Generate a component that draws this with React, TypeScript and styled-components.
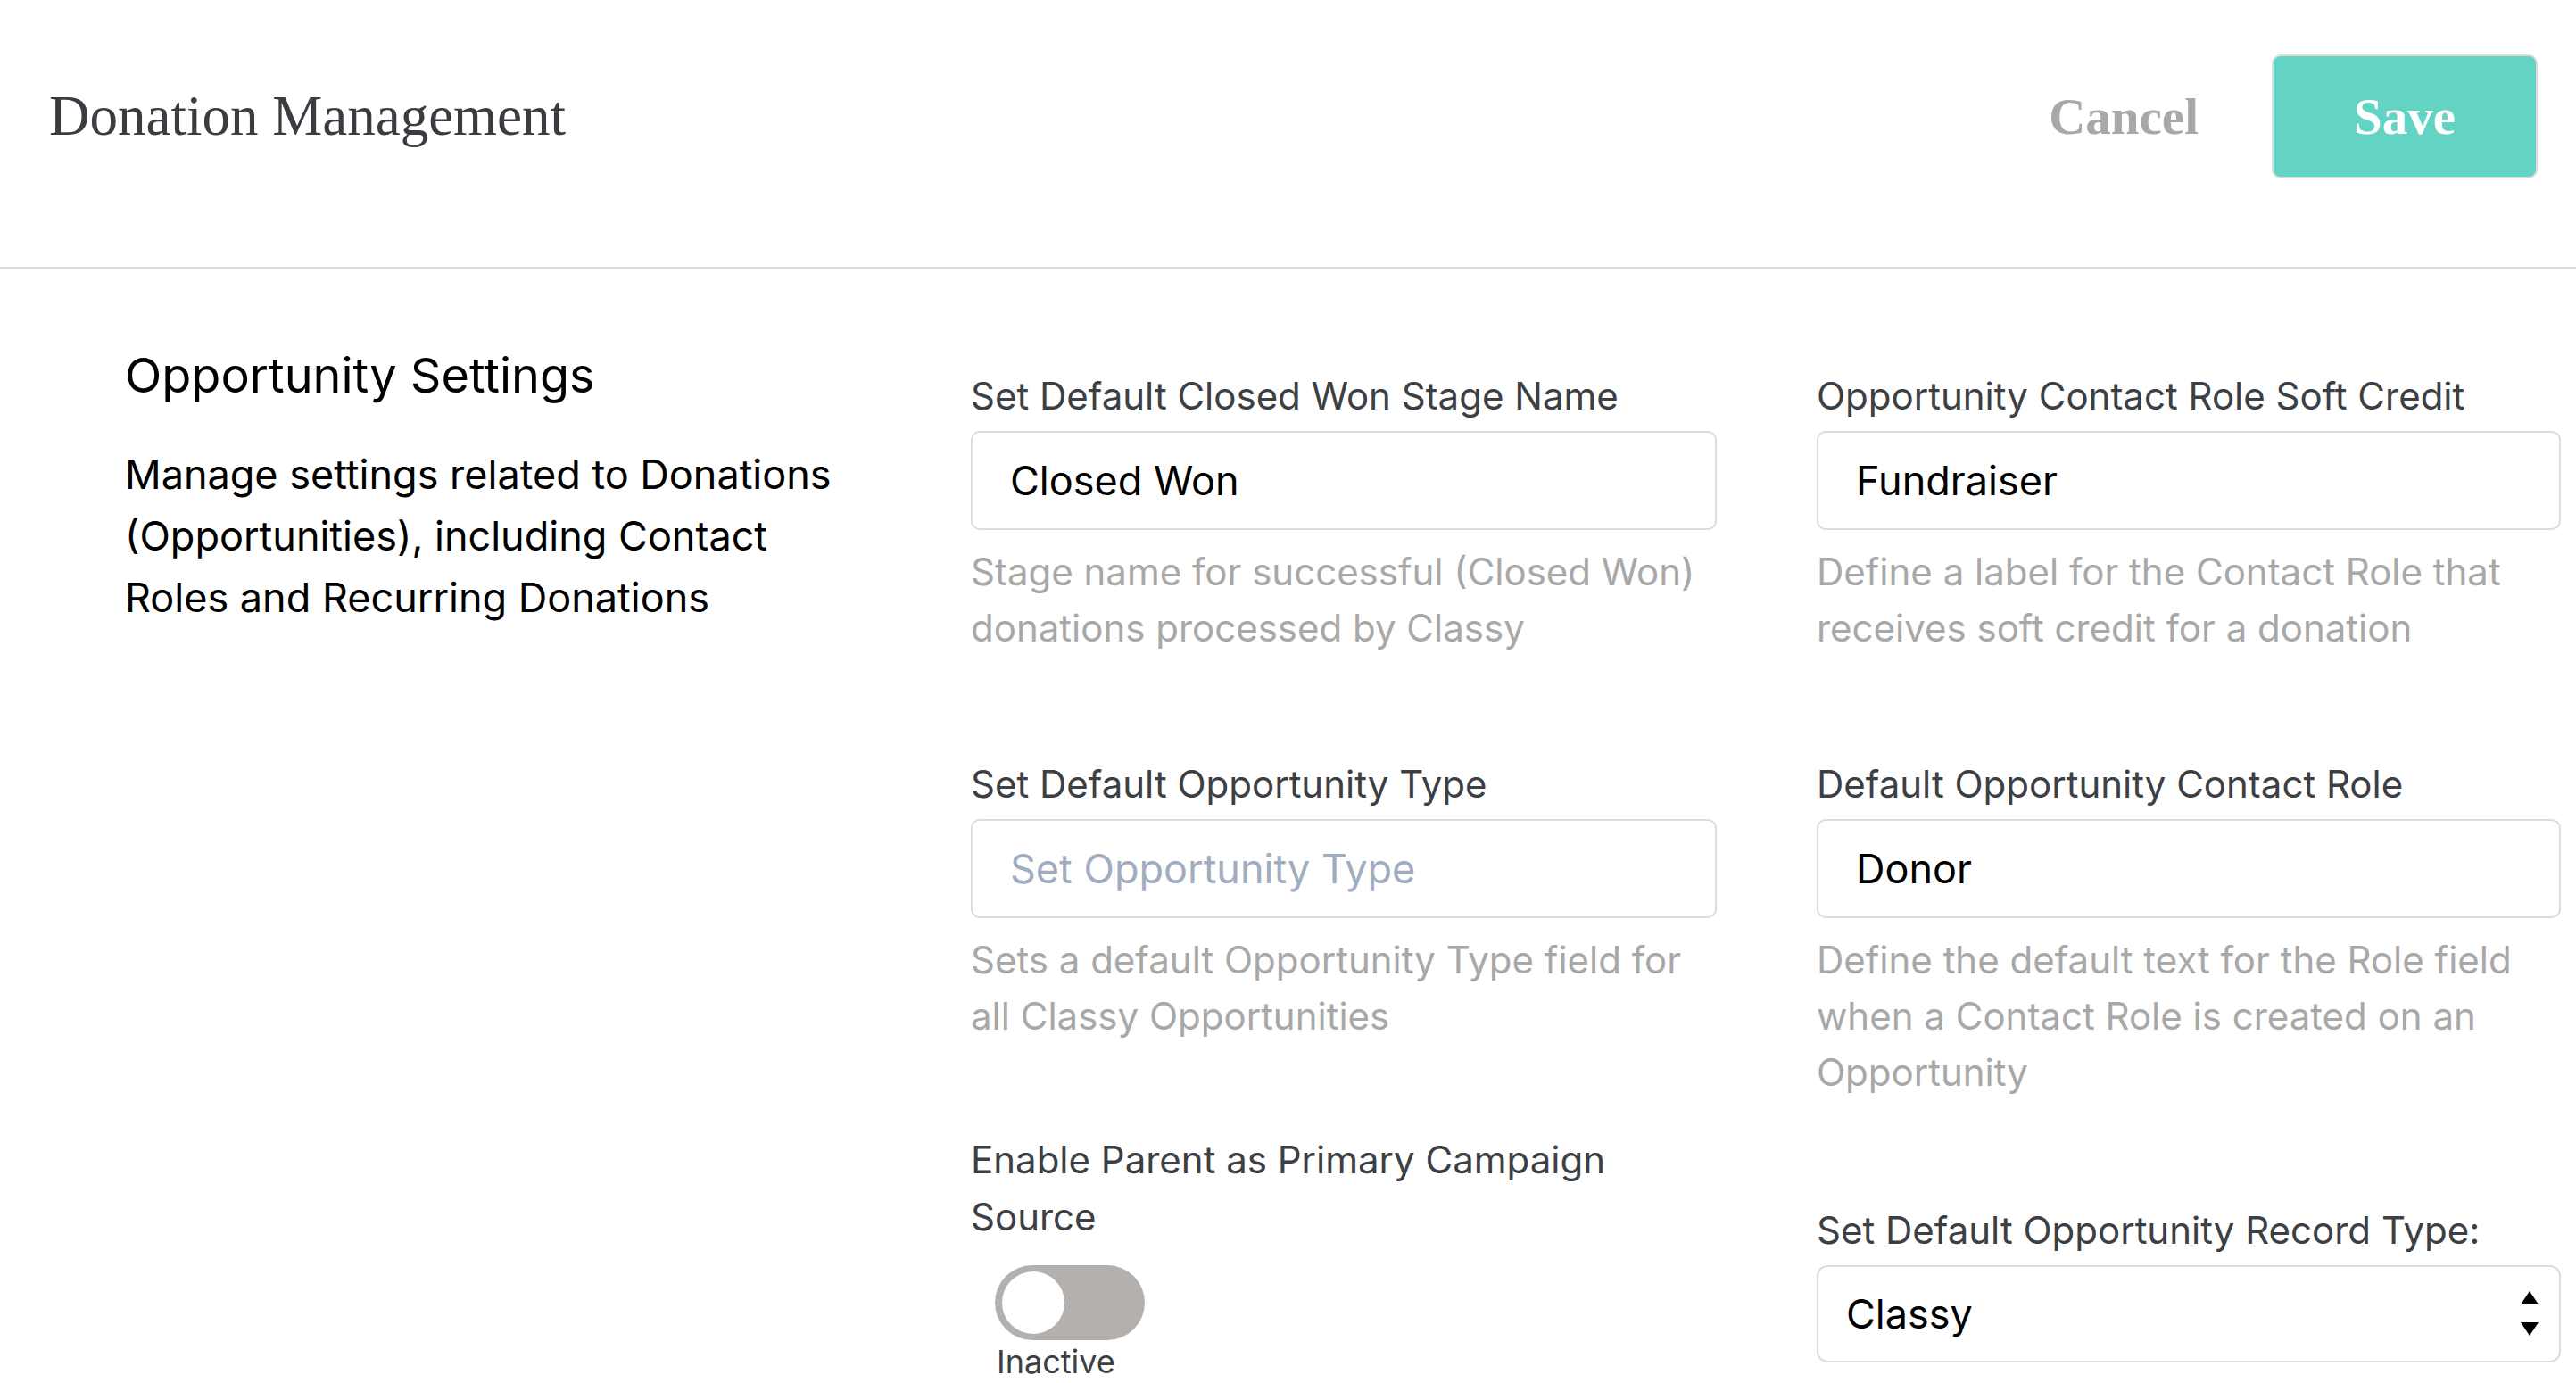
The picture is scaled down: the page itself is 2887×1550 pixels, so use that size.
import React from "react";
import styled, { createGlobalStyle } from "styled-components";

const GlobalStyle = createGlobalStyle`
  html, body {
    margin: 0;
    padding: 0;
    background: #ffffff;
  }
  body {
    font-family: Inter, "Liberation Sans", sans-serif;
    overflow: hidden;
  }
  * {
    box-sizing: border-box;
  }
`;

const Page = styled.div`
  width: 2887px;
  min-height: 1550px;
`;

const Header = styled.header`
  display: flex;
  align-items: center;
  justify-content: space-between;
  height: 301px;
  padding: 0 43px 38px 55px;
  border-bottom: 2px solid #dcdcdc;
`;

const PageTitle = styled.h1`
  margin: 0;
  font-family: "Liberation Serif", serif;
  font-size: 63px;
  font-weight: 400;
  line-height: 1;
  color: #393c41;
`;

const Actions = styled.div`
  display: flex;
  align-items: center;
  gap: 82px;
`;

const TextButton = styled.button`
  border: none;
  background: none;
  padding: 0;
  font-family: "Liberation Serif", serif;
  font-size: 57px;
  font-weight: 700;
  line-height: 1;
  color: #a6a8ab;
  cursor: pointer;
`;

const SaveButton = styled.button`
  width: 298px;
  height: 139px;
  border: 2px solid #dcdcdc;
  border-radius: 10px;
  background: #63d3c3;
  font-family: "Liberation Serif", serif;
  font-size: 57px;
  font-weight: 700;
  line-height: 1;
  color: #ffffff;
  cursor: pointer;
`;

const Body = styled.main`
  display: grid;
  grid-template-columns: 836px 836px 834px;
  column-gap: 112px;
  padding: 87px 0 0 140px;
`;

const Intro = styled.section``;

const SectionTitle = styled.h2`
  margin: 0;
  font-size: 54px;
  font-weight: 400;
  line-height: 66px;
  color: #000000;
`;

const SectionText = styled.p`
  margin: 43px 0 0;
  font-size: 45px;
  line-height: 69px;
  color: #000000;
`;

const FieldColumn = styled.div`
  display: flex;
  flex-direction: column;
  padding-top: 24px;
`;

const Field = styled.div<{ $gap?: number; $maxWidth?: number }>`
  display: flex;
  flex-direction: column;
  margin-top: ${({ $gap }) => $gap ?? 0}px;
  max-width: ${({ $maxWidth }) => ($maxWidth ? `${$maxWidth}px` : "none")};
`;

const Label = styled.label`
  margin-bottom: 7px;
  font-size: 42px;
  line-height: 64px;
  color: #3c3f44;
`;

const TextInput = styled.input`
  width: 100%;
  height: 111px;
  padding: 0 42px;
  border: 2px solid #dcdcdc;
  border-radius: 10px;
  font-family: Inter, "Liberation Sans", sans-serif;
  font-size: 45px;
  color: #000000;
  outline: none;

  &::placeholder {
    color: #a0adc0;
  }
`;

const Helper = styled.p`
  margin: 15px 0 0;
  font-size: 42px;
  line-height: 63px;
  color: #a8a8a8;
`;

const ToggleTrack = styled.button<{ $on: boolean }>`
  position: relative;
  width: 168px;
  height: 84px;
  margin: 15px 0 0 27px;
  padding: 0;
  border: none;
  border-radius: 42px;
  background: ${({ $on }) => ($on ? "#63d3c3" : "#b3b0ad")};
  cursor: pointer;
`;

const ToggleKnob = styled.span<{ $on: boolean }>`
  position: absolute;
  top: 7px;
  left: ${({ $on }) => ($on ? "90px" : "8px")};
  width: 70px;
  height: 70px;
  border-radius: 50%;
  background: #ffffff;
`;

const ToggleState = styled.span`
  margin: 2px 0 0 29px;
  font-size: 36px;
  line-height: 44px;
  color: #3c3f44;
`;

const SelectWrap = styled.div`
  position: relative;
`;

const Select = styled.select`
  width: 100%;
  height: 109px;
  padding: 0 80px 0 31px;
  border: 2px solid #dcdcdc;
  border-radius: 12px;
  background: #ffffff;
  font-family: Inter, "Liberation Sans", sans-serif;
  font-size: 45px;
  color: #000000;
  appearance: none;
  outline: none;
`;

const SelectArrows = styled.svg`
  position: absolute;
  top: 29px;
  right: 25px;
  pointer-events: none;
`;

export default function App() {
  const [active, setActive] = React.useState(false);

  return (
    <Page>
      <GlobalStyle />
      <Header>
        <PageTitle>Donation Management</PageTitle>
        <Actions>
          <TextButton>Cancel</TextButton>
          <SaveButton>Save</SaveButton>
        </Actions>
      </Header>

      <Body>
        <Intro>
          <SectionTitle>Opportunity Settings</SectionTitle>
          <SectionText>
            Manage settings related to Donations (Opportunities), including
            Contact Roles and Recurring Donations
          </SectionText>
        </Intro>

        <FieldColumn>
          <Field>
            <Label>Set Default Closed Won Stage Name</Label>
            <TextInput defaultValue="Closed Won" />
            <Helper>
              Stage name for successful (Closed Won) donations processed by
              Classy
            </Helper>
          </Field>
          <Field $gap={112}>
            <Label>Set Default Opportunity Type</Label>
            <TextInput placeholder="Set Opportunity Type" />
            <Helper>
              Sets a default Opportunity Type field for all Classy Opportunities
            </Helper>
          </Field>
          <Field $gap={98} $maxWidth={780}>
            <Label>Enable Parent as Primary Campaign Source</Label>
            <ToggleTrack $on={active} onClick={() => setActive(!active)}>
              <ToggleKnob $on={active} />
            </ToggleTrack>
            <ToggleState>{active ? "Active" : "Inactive"}</ToggleState>
          </Field>
        </FieldColumn>

        <FieldColumn>
          <Field>
            <Label>Opportunity Contact Role Soft Credit</Label>
            <TextInput defaultValue="Fundraiser" />
            <Helper>
              Define a label for the Contact Role that receives soft credit for
              a donation
            </Helper>
          </Field>
          <Field $gap={112}>
            <Label>Default Opportunity Contact Role</Label>
            <TextInput defaultValue="Donor" />
            <Helper>
              Define the default text for the Role field when a Contact Role is
              created on an Opportunity
            </Helper>
          </Field>
          <Field $gap={114}>
            <Label>Set Default Opportunity Record Type:</Label>
            <SelectWrap>
              <Select defaultValue="Classy">
                <option value="Classy">Classy</option>
                <option value="Donation">Donation</option>
              </Select>
              <SelectArrows width="20" height="50" viewBox="0 0 20 50">
                <polygon points="10,0 20,15 0,15" fill="#000" />
                <polygon points="0,35 20,35 10,50" fill="#000" />
              </SelectArrows>
            </SelectWrap>
          </Field>
        </FieldColumn>
      </Body>
    </Page>
  );
}
